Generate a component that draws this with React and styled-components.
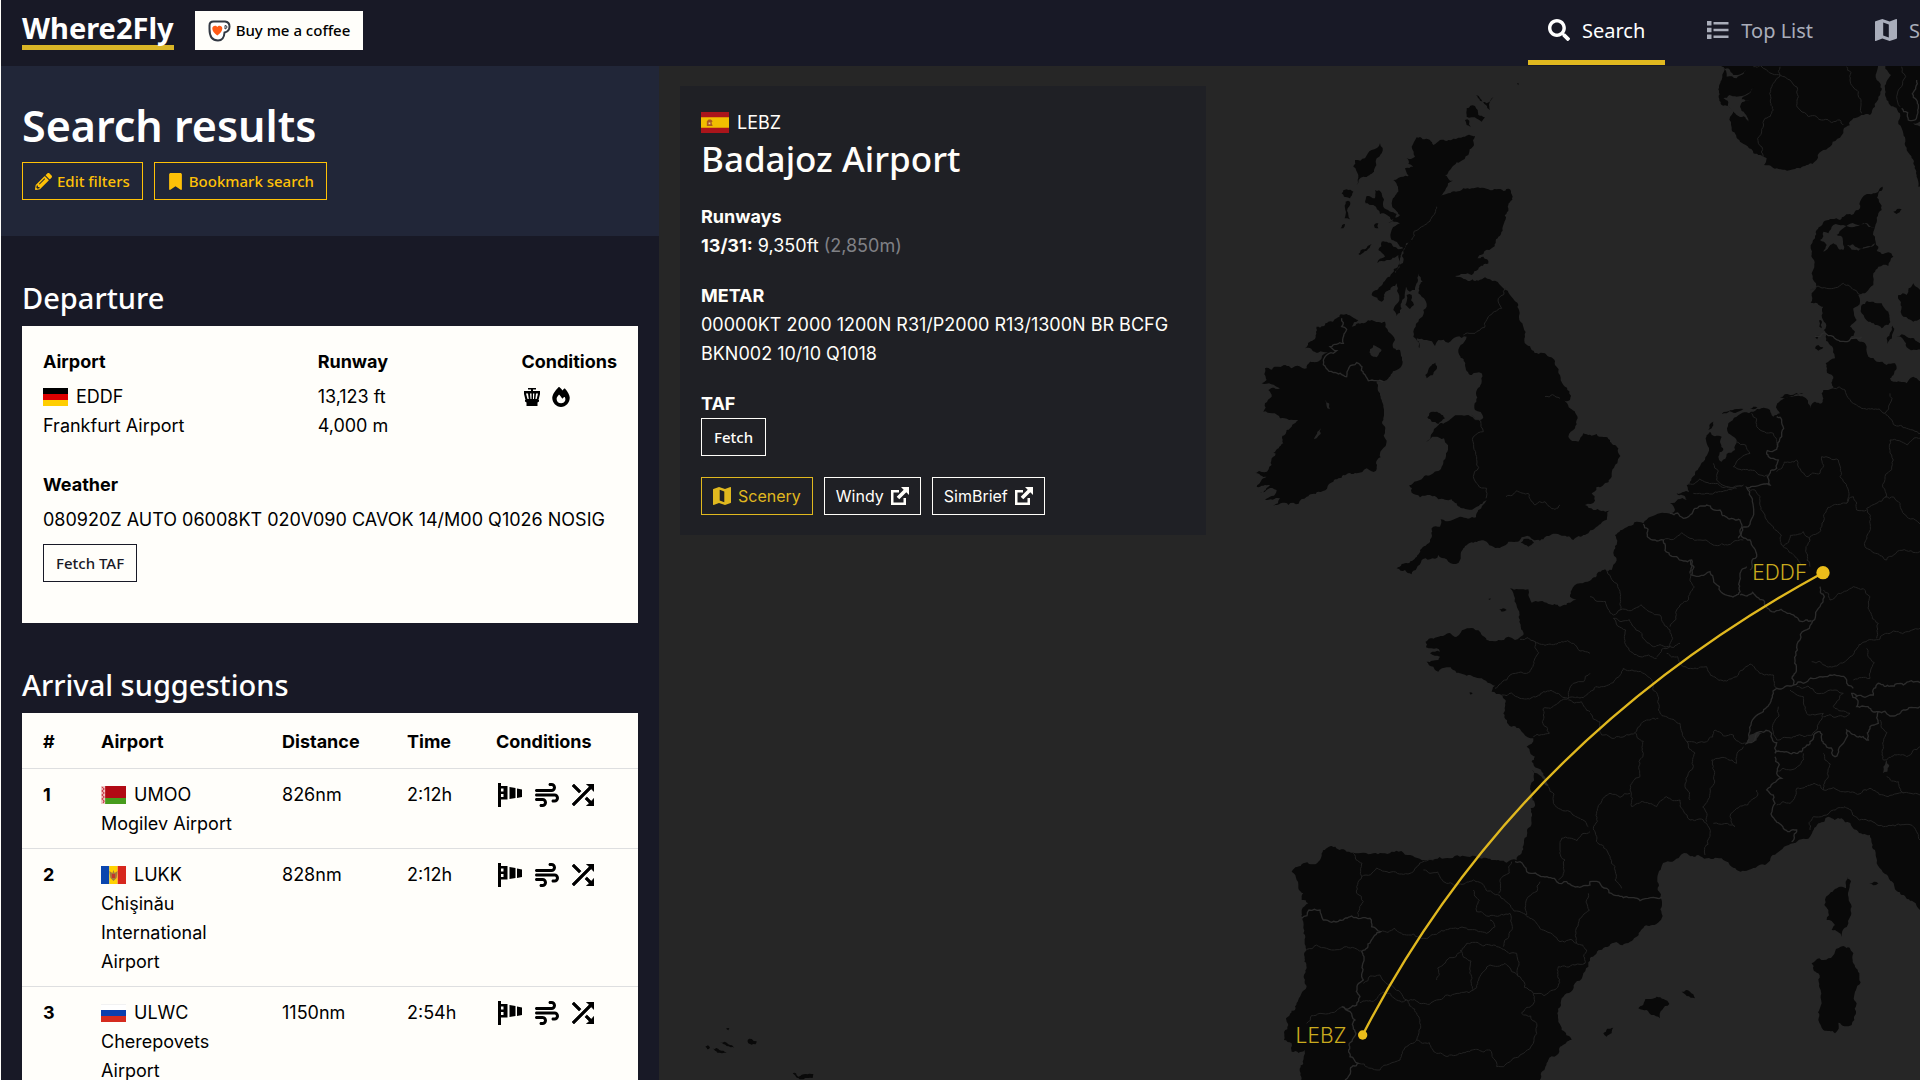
import React from "react";
import styled, { createGlobalStyle } from "styled-components";
import { FaPencilAlt, FaSearch } from "react-icons/fa";
import { FaBookmark, FaFire, FaWind } from "react-icons/fa6";

const arrivals = [
  { icao: "UMOO", name: "Mogilev Airport", flag: "by", distance: "826nm", time: "2:12h" },
  { icao: "LUKK", name: "Chişinău International Airport", flag: "md", distance: "828nm", time: "2:12h" },
  { icao: "ULWC", name: "Cherepovets Airport", flag: "ru", distance: "1150nm", time: "2:54h" },
];

export default function App() {
  return (
    <>
      <GlobalStyle />
      <Page>
        <Header />
        <Main>
          <Sidebar>
            <ResultsHeader>
              <Title>Search results</Title>
              <ButtonRow>
                <Button $color="#ffc107">
                  <FaPencilAlt size={17} />
                  Edit filters
                </Button>
                <Button $color="#ffc107">
                  <FaBookmark size={17} />
                  Bookmark search
                </Button>
              </ButtonRow>
            </ResultsHeader>
            <Departure />
            <Arrivals />
          </Sidebar>
          <MapArea>
            <EuropeMap />
            <AirportInfo />
          </MapArea>
        </Main>
      </Page>
    </>
  );
}

function Header() {
  return (
    <TopBar>
      <Logo href="#">Where2Fly</Logo>
      <CoffeeLink href="#coffee">
        <CupIcon />
        Buy me a coffee
      </CoffeeLink>
      <Nav>
        <NavLink href="#search" $active>
          <FaSearch size={22} />
          Search
        </NavLink>
        <NavLink href="#top">
          <ListIcon />
          Top List
        </NavLink>
        <NavLink href="#scenery">
          <MapIcon size={22} />
          Scenery
        </NavLink>
      </Nav>
    </TopBar>
  );
}

function Departure() {
  return (
    <Section>
      <SectionTitle>Departure</SectionTitle>
      <Card>
        <Facts>
          <div>
            <Label>Airport</Label>
            <Code>
              <Flag country="de" />
              EDDF
            </Code>
            <Text>Frankfurt Airport</Text>
          </div>
          <div>
            <Label>Runway</Label>
            <Text>13,123 ft</Text>
            <Text>4,000 m</Text>
          </div>
          <div>
            <Label>Conditions</Label>
            <Icons $gap={10}>
              <TowerIcon />
              <FaFire size={20} />
            </Icons>
          </div>
        </Facts>
        <Label>Weather</Label>
        <Text>080920Z AUTO 06008KT 020V090 CAVOK 14/M00 Q1026 NOSIG</Text>
        <TafButton $color="#181926">Fetch TAF</TafButton>
      </Card>
    </Section>
  );
}

function Arrivals() {
  return (
    <Section>
      <SectionTitle>Arrival suggestions</SectionTitle>
      <Table>
        <thead>
          <tr>
            <Th $width="68px">#</Th>
            <Th $width="181px">Airport</Th>
            <Th $width="125px">Distance</Th>
            <Th $width="89px">Time</Th>
            <Th $width="auto">Conditions</Th>
          </tr>
        </thead>
        <tbody>
          {arrivals.map((airport, i) => (
            <tr key={airport.icao}>
              <Td>
                <b>{i + 1}</b>
              </Td>
              <Td>
                <Code>
                  <Flag country={airport.flag} />
                  {airport.icao}
                </Code>
                {airport.name}
              </Td>
              <Td>{airport.distance}</Td>
              <Td>{airport.time}</Td>
              <Td>
                <Icons $gap={13}>
                  <WindsockIcon />
                  <FaWind size={24} />
                  <CrossIcon />
                </Icons>
              </Td>
            </tr>
          ))}
        </tbody>
      </Table>
    </Section>
  );
}

function AirportInfo() {
  return (
    <InfoPanel>
      <Code>
        <Flag country="es" width={28} height={21} />
        LEBZ
      </Code>
      <InfoTitle>Badajoz Airport</InfoTitle>
      <InfoBlock>
        <b>Runways</b>
        <Text>
          <b>13/31:</b> 9,350ft <Muted>(2,850m)</Muted>
        </Text>
      </InfoBlock>
      <InfoBlock>
        <b>METAR</b>
        <Text>00000KT 2000 1200N R31/P2000 R13/1300N BR BCFG BKN002 10/10 Q1018</Text>
      </InfoBlock>
      <InfoBlock>
        <b>TAF</b>
        <Button $color="#fffefa">Fetch</Button>
      </InfoBlock>
      <ButtonRow>
        <InfoLink href="#scenery" $color="#e0b81f">
          <MapIcon size={18} />
          Scenery
        </InfoLink>
        <InfoLink href="#windy" $color="#fffefa">
          Windy
          <ExternalIcon />
        </InfoLink>
        <InfoLink href="#simbrief" $color="#fffefa">
          SimBrief
          <ExternalIcon />
        </InfoLink>
      </ButtonRow>
    </InfoPanel>
  );
}

function Flag({ country, width = 25, height = 18 }) {
  return (
    <svg width={width} height={height} viewBox="0 0 24 18" preserveAspectRatio="none">
      {country === "de" && (
        <>
          <path fill="#000" d="M0 0h24v6H0z" />
          <path fill="#d00" d="M0 6h24v6H0z" />
          <path fill="#ffce00" d="M0 12h24v6H0z" />
        </>
      )}
      {country === "by" && (
        <>
          <path fill="#b20a14" d="M0 0h24v12H0z" />
          <path fill="#479c1c" d="M0 12h24v6H0z" />
          <path fill="#f2c9c9" d="M0 0h4v18H0z" />
          <path stroke="#c8313e" d="M1 1l2 2-2 2 2 2-2 2 2 2-2 2 2 2-1 2" fill="none" />
        </>
      )}
      {country === "md" && (
        <>
          <path fill="#0b46ae" d="M0 0h8v18H0z" />
          <path fill="#ffd200" d="M8 0h8v18H8z" />
          <path fill="#d7271d" d="M16 0h8v18h-8z" />
          <path fill="#a77b3b" d="M8 5l3 2 1-3 1 3 3-2-1 7-3 3-3-3z" />
          <path fill="#c4342b" d="M10.500 8h3v4h-3z" />
        </>
      )}
      {country === "ru" && (
        <>
          <path fill="#fff" d="M0 0h24v6H0z" />
          <path fill="#0b3fae" d="M0 6h24v6H0z" />
          <path fill="#d52b1e" d="M0 12h24v6H0z" />
          <path stroke="#e4e4e4" d="M0 0h24" />
        </>
      )}
      {country === "es" && (
        <>
          <path fill="#aa151b" d="M0 0h24v18H0z" />
          <path fill="#f1bf00" d="M0 4.500h24v9H0z" />
          <path fill="#ad5a1d" d="M5 12V8l1.500-1.500h2L10 8l-1 1 1 3z" />
          <path fill="#e6c9a0" d="M6.500 9h1.500v1.500H6.500z" />
        </>
      )}
    </svg>
  );
}

function CupIcon() {
  return (
    <svg width="23" height="22" viewBox="0 0 23 22" fill="none">
      <path
        d="M1.500 5.500Q1.500 1.500 5.500 1.500H17Q21.500 2 21.500 6.500 21.500 11.500 16.500 12.500 16 20.500 10 20.500 1.500 20.500 1.500 9z"
        fill="#fff"
        stroke="#323842"
        strokeWidth="2"
      />
      <path d="M17 5.500v3.500Q19 8.500 19 7 19 5.500 17 5.500z" stroke="#323842" />
      <path d="M9.300 15.500C6 13 4.300 11 4.300 8.500 4.300 5.500 8 4.700 9.300 7 10.600 4.700 14.300 5.500 14.300 8.500 14.300 11 12.600 13 9.300 15.500z" fill="#ff5a16" />
    </svg>
  );
}

function ListIcon() {
  return (
    <svg width="22" height="18" viewBox="0 0 22 18" fill="currentColor">
      <path d="M0 0h4.500v4.500H0zM0 6.700h4.500v4.500H0zM0 13.400h4.500v4.500H0z" />
      <path d="M6.500 1h15v2.500h-15zM6.500 7.700h15v2.500h-15zM6.500 14.400h15v2.500h-15z" />
    </svg>
  );
}

function MapIcon({ size }) {
  return (
    <svg width={size} height={size} viewBox="3 3 18 18" fill="currentColor">
      <path d="M20.500 3l-.160.030L15 5.100 9 3 3.360 4.900c-.210.070-.360.250-.360.480V20.500c0 .280.220.500.500.500l.160-.030L9 18.900l6 2.100 5.640-1.900c.210-.070.360-.250.360-.480V3.500c0-.280-.220-.500-.500-.500zM14.300 18.200l-4.600-1.600V5.800l4.600 1.600z" />
    </svg>
  );
}

function TowerIcon() {
  return (
    <svg width="18" height="20" viewBox="0 0 18 20" fill="currentColor">
      <path d="M5 1h8v1.500h-3V4h7v3l-1.500 6H16v1.500l-1.500 1V19h-11v-3.500L2 14.500V13h.500L1 7V4h7V2.500H5z" />
      <path d="M3 6.500h2l.8 5.500H4.500zM7 6.500h1.500V12h-1zM10 6.500h1.300l-.3 5.500h-1zM13 6.500h2L13.700 12h-1.300z" fill="#fffefa" />
    </svg>
  );
}

function WindsockIcon() {
  return (
    <svg width="24" height="24" viewBox="0 0 24 24" fill="currentColor">
      <path d="M0 0h3v3h6.500v13.500H3V24H0zM3 5.500v3h2.500v-3zm0 5.500v3h2.500v-3z" fillRule="evenodd" />
      <path d="M11.500 4l6 1v10l-6 1zM19 5.500l5 1V14l-5 1z" />
    </svg>
  );
}

function CrossIcon() {
  return (
    <svg width="22" height="22" viewBox="4 4 16 16" fill="currentColor" stroke="currentColor" strokeWidth="0.500">
      <path d="M10.590 9.170L5.410 4 4 5.410l5.170 5.170 1.420-1.410zM14.500 4l2.040 2.040L4 18.590 5.410 20 17.960 7.460 20 9.500V4h-5.500zm.330 9.410l-1.410 1.410 3.130 3.130L14.500 20H20v-5.500l-2.040 2.040-3.130-3.130z" />
    </svg>
  );
}

function ExternalIcon() {
  return (
    <svg width="18" height="18" viewBox="0 0 18 18" fill="currentColor">
      <path d="M0 3h8v2.500H2.500v10h10V11H15v7H0z" />
      <path d="M10 0h8v8l-2.700-2.700-7 7-2.600-2.600 7-7z" />
    </svg>
  );
}

/* Map drawing. One map unit is a third of a pixel. */

// Each part is [dx, dy, "x,y x,y ..."]; the parts are joined into one list.
function toPoints(parts) {
  return parts.flatMap(([dx, dy, list]) =>
    list.split(" ").map((pair) => {
      const [x, y] = pair.split(",").map(Number);
      return [x + dx, y + dy];
    })
  );
}

// Breaks long straight edges into small uneven ones so that coasts look natural.
function toPath(parts, closed, amount = 0.2) {
  const points = toPoints(parts);
  if (closed) points.push(points[0]);
  let seed = 7;
  const random = () => {
    seed = (seed * 16807) % 2147483647;
    return seed / 2147483647 - 0.5;
  };
  const split = (a, b) => {
    const dx = b[0] - a[0];
    const dy = b[1] - a[1];
    const length = Math.hypot(dx, dy);
    if (length < 9 || length > 400) return [b];
    const shift = random() * amount * 2;
    const middle = [(a[0] + b[0]) / 2 - dy * shift, (a[1] + b[1]) / 2 + dx * shift];
    return [...split(a, middle), ...split(middle, b)];
  };
  const result = [points[0]];
  for (let i = 1; i < points.length; i++) {
    result.push(...split(points[i - 1], points[i]));
  }
  return (
    "M" + result.map(([x, y]) => `${Math.round(x)} ${Math.round(y)}`).join("L") + (closed ? "Z" : "")
  );
}

const land = [
  // Great Britain
  [
    [0, 0, "650,232 668,238 690,240 700,255 720,240 760,236 790,230 825,228 822,255 805,285 780,305 750,330 735,345 750,362 758,362 738,385 720,410 745,400 790,385 840,384 890,388 930,388 938,410 925,445 912,490 895,530 875,565 850,582 810,600 850,590 865,610 835,628 815,645 765,648 800,660 835,662 855,652 885,662 910,685 930,705 952,728 958,780 975,830 995,870 1040,885 1065,915"],
    [1080, 0, "0,945 10,975 30,1020 5,1020 30,1045 50,1080 45,1105 25,1130 55,1145 70,1120 110,1122 150,1140 175,1165 172,1210 155,1250 130,1275 95,1300 105,1322 75,1335 100,1350 148,1352 140,1380 110,1400 75,1425 40,1440 0,1425"],
    [0, 0, "1030,1438 990,1430 960,1440 925,1445 905,1460 880,1460 860,1445 820,1448 790,1465 780,1500 768,1512 740,1498 715,1485 690,1498 665,1500 650,1525 635,1543 615,1530 590,1525 605,1512 640,1500 660,1470 690,1440 695,1405 720,1400 722,1378 780,1370 828,1372 835,1350 860,1320 885,1298 850,1325 830,1340 800,1348 770,1330 755,1318 715,1318 690,1305 660,1312 635,1298 628,1275 660,1260 700,1240 730,1210 738,1180 732,1135 705,1130 678,1145 700,1115 720,1090 755,1075 805,1065 830,1080 850,1072 825,1050 828,1000 845,960 845,940 815,945 795,915 778,885 782,855 800,830 770,830 745,848 715,840 705,858 680,840 650,835 658,865 640,830 640,815 655,785 680,740 665,710 655,700 668,665 655,640 645,690 630,695 618,680 605,745 590,768 580,750 595,700 590,670 545,725 515,705 540,680 570,650 600,610 595,585 560,600 532,610 555,590 535,570 545,545 580,560 610,565 575,540 575,510 600,490 565,488 600,465 575,430 595,395 580,360 610,350 635,350 615,325 640,320 620,295 645,290 635,260"],
  ],
  // Ireland
  [[0, 0, "410,775 440,762 475,780 455,800 475,790 515,780 555,785 565,815 585,840 580,865 600,870 608,905 590,930 560,960 530,965 540,1000 550,1040 555,1110 545,1170 528,1210 528,1232 500,1225 470,1240 430,1245 400,1265 355,1295 320,1310 265,1335 220,1338 240,1315 195,1320 230,1290 180,1298 210,1275 170,1280 200,1250 162,1240 215,1215 220,1190 300,1165 220,1178 250,1150 260,1110 295,1080 240,1075 190,1055 195,1030 215,1010 205,990 240,985 185,970 200,960 195,925 235,920 275,925 320,925 330,905 365,895 385,875 315,865 340,840 350,800 385,785"]],
  // Hebrides, Skye, Orkney, Man, Anglesey, Wight and smaller isles
  [[0, 0, "540,250 545,280 530,295 522,335 490,350 470,375 475,345 460,320 465,300 495,295 515,270"]],
  [[0, 0, "425,400 440,388 460,395 450,415 432,410"]],
  [[0, 0, "437,425 450,425 450,478 434,475"]],
  [[0, 0, "422,505 435,492 430,505"]],
  [[0, 0, "525,390 545,400 550,440 590,462 575,480 540,462 520,435 497,430 500,408 525,415"]],
  [[0, 0, "522,495 535,490 535,505 524,503"]],
  [[0, 0, "475,582 495,568 515,552 500,572 480,585"]],
  [[0, 0, "620,705 635,705 642,735 630,747 616,735"]],
  [[0, 0, "800,145 825,138 835,165 855,172 845,185 815,172 800,170"]],
  [[0, 0, "795,180 808,182 812,202 800,195"]],
  [[0, 0, "828,105 840,115 860,130 880,112 868,130 870,150 858,135 840,122"]],
  [[0, 0, "951,70 956,70 955,76"]],
  [[0, 0, "706,908 708,930 680,955 676,945 690,920"]],
  [[0, 0, "682,1072 700,1055 720,1060 735,1075 715,1092 695,1085"]],
  [[0, 0, "962,1448 985,1436 1002,1448 985,1460"]],
  // Continent
  [
    [1080, 0, "1100,960 1060,950 1040,970 1000,965 990,955 1010,925 1005,910 980,915 950,905 925,890 920,860 905,845 870,835 885,815 870,800 890,780 880,745 900,725 895,705 920,695 940,675 940,640 955,620 985,618 1000,590 985,577 945,575 955,560 945,530 945,500 965,450 955,400 968,380 940,400 915,405 900,425 875,465 840,480 795,482 770,510 765,535 752,565 755,640 768,670 755,700 752,728 790,740 797,790 797,830 820,870 825,895 797,910 800,930 820,950 820,985 790,990 785,1030 765,1025 752,1045 738,1015 690,1010 665,1020 650,1035 660,1060 640,1070 630,1050 580,1055 530,1070 505,1090 505,1120 530,1140 525,1170 485,1205 475,1190 490,1170 485,1130 450,1115 440,1150 430,1205 405,1245 380,1275 395,1300 350,1300 380,1320 330,1330 345,1350 300,1360 250,1390 200,1402 165,1425 162,1470 155,1530"],
    [180, 1500, "990,62 960,70 935,90 930,110 960,118 935,125 900,140 865,132 815,128 805,105 805,88 775,88 750,85 765,115 775,150 780,190 790,225 765,240 745,230 715,240 680,240 665,225 640,205 615,208 590,230 555,225 530,232 497,245 498,262 530,265 540,275 510,280 540,290 535,300 500,305 520,320 535,335 560,322 600,340 640,350 665,355 690,370 710,375 695,395 725,405 735,440 730,460 755,500 790,520 820,535 800,560 825,590 815,605 850,640 865,680 845,650 817,630 815,700 825,738 812,745 800,830 785,880 770,900 740,908 700,900 660,895 600,890 570,895 510,900 450,885 395,875 340,880 280,878 255,870 215,858 185,880 175,905 130,910 95,935 110,960 115,985 130,1000 125,1020 145,1030 125,1050 130,1120 140,1170 135,1240 120,1310 105,1350 78,1375 85,1395 72,1440 95,1450 95,1475 135,1470 130,1510 130,1580 845,1580 865,1500 900,1460 935,1440 905,1410 892,1360 910,1310 945,1270 985,1220"],
    [1170, 1500, "0,1195 30,1170 120,1145 150,1115 215,1075 215,1020 203,990 205,940 240,905 290,880 325,885 350,895 400,900 425,920 470,932 525,915 560,880 610,850 660,830 685,790 715,770 755,775 800,810 840,825 855,870 875,930 895,950 935,1005 970,1025 1020,1060"],
  ],
  // Norway, Sweden
  [[1080, 0, "480,0 485,60 485,135 520,150 515,210 540,245 580,280 620,295 612,315 650,325 700,328 740,315 770,300 810,260 850,210 880,175 930,165 945,140 955,110 965,90 950,60 965,0"]],
  [[1080, 0, "975,0 975,90 990,135 1020,160 1030,220 1040,270 1060,310 1070,350 1075,380 1100,380 1100,0"]],
  // Danish islands
  [[1080, 0, "905,735 940,725 965,730 985,755 985,795 965,805 925,785 905,760"]],
  [[1080, 0, "1015,705 1040,705 1060,670 1100,700 1100,780 1060,785 1030,770 1025,740"]],
  [[1080, 0, "1010,828 1040,830 1080,850 1100,865 1040,862"]],
  [[1080, 0, "998,797 1000,815 982,852 980,835"]],
  [[1080, 0, "1000,455 1025,448 1010,462"]],
  [[1080, 0, "778,780 786,785 785,805 778,800"]],
  [[1080, 0, "765,830 780,828 772,838"]],
  [[1080, 0, "765,865 775,855 790,862 775,872"]],
  // Frisian islands
  [[1080, 0, "485,1062 500,1055 550,1047 500,1060"]],
  [[1080, 0, "570,1047 592,1042 580,1048"]],
  [[1080, 0, "660,1012 690,1005 730,1002 690,1010"]],
  [[1080, 0, "445,1110 460,1085 455,1105"]],
  // Channel and Biscay islands
  [[180, 1500, "718,148 740,150 725,155"]],
  [[180, 1500, "685,117 692,115 690,120"]],
  [[180, 1500, "628,398 638,400 632,404"]],
  // Mediterranean islands
  [[1170, 1500, "772,945 778,985 785,1040 775,1090 755,1130 725,1110 735,1095 710,1080 715,1050 703,1035 715,1005 750,980 768,985"]],
  [[1170, 1500, "760,1158 790,1180 795,1220 808,1240 798,1290 800,1330 785,1395 745,1388 735,1420 700,1410 685,1380 692,1290 685,1240 665,1210 715,1195 735,1175"]],
  [[1170, 1500, "145,1345 200,1310 238,1332 210,1375 185,1365 170,1350"]],
  [[1170, 1500, "275,1295 300,1295 315,1315 290,1308"]],
  [[1170, 1500, "40,1420 70,1403 65,1420 50,1430"]],
  [[1170, 1500, "838,970 865,970 850,976"]],
  // Azores
  [[-1560, 2850, "76,110 84,106 90,112 82,118"]],
  [[-1560, 2850, "98,116 118,120 140,129 112,128"]],
  [[-1560, 2850, "120,96 145,103 164,113 140,108"]],
  [[-1560, 2850, "138,56 148,55 145,61"]],
  [[-1560, 2850, "203,90 215,87 230,94 226,103 205,100"]],
  [[-1560, 2850, "338,190 348,190 355,200 400,192 398,204 370,208 350,203"]],
];

const water = [
  [[0, 0, "520,855 510,868 512,885 530,892 538,878 545,870"]],
  [[1080, 0, "790,515 780,540 800,555 790,575 820,550 850,570 848,535 830,525 850,505 910,490 945,502 900,495 850,495 820,495 805,520"]],
  [[1080, 0, "860,555 895,565 945,550 940,558 895,572"]],
  [[1080, 0, "485,20 520,45 560,30 530,55 500,50"]],
  [[1080, 0, "490,115 530,110 585,80 545,118 570,120 540,140 565,185 530,165 510,145"]],
  [[1170, 1500, "890,600 892,635 878,640 880,620"]],
  [[1170, 1500, "470,545 500,515 540,512 510,522 480,550"]],
  [[0, 0, "375,1020 390,1048 382,1045"]],
  [[0, 0, "362,1105 350,1135 342,1138 352,1115"]],
  [[0, 0, "610,570 640,540 600,600 585,640"]],
];

const countryBorders = [
  [[0, 0, "425,775 425,800 440,808 430,850 390,860 410,872 370,900 400,938 440,950 470,908 490,940 505,962 550,965"]],
  [[1080, 0, "765,830 820,830 855,845 905,830"]],
  [[1080, 0, "650,1070 665,1080 665,1130 650,1168 622,1172 625,1190 655,1200 650,1225 622,1250 630,1275 560,1282 580,1340 565,1400 540,1410 545,1430 570,1440 590,1490 570,1530"]],
  [[1080, 0, "330,1360 370,1375 405,1345 440,1335 480,1350 540,1380 545,1415 535,1435"]],
  [[1080, 0, "250,1392 262,1430 310,1440 318,1475 350,1490 395,1500 390,1540"]],
  [[1170, 1500, "300,0 305,45 360,35 375,70 420,108 450,95 450,50 470,20"]],
  [[1170, 1500, "450,105 520,120 545,155 600,160 665,183"]],
  [[1170, 1500, "690,80 690,140 665,190 630,240 615,300 610,375 560,385 540,430 510,460 480,510 470,550 510,515 545,520 555,580 600,580 635,575 660,545 690,515 700,550 735,590 745,570 770,510 800,530 835,540 840,500 865,490 865,455 800,440 785,400 850,405 865,370 940,375 990,368"]],
  [[1170, 1500, "610,375 640,370 690,350 720,345 770,360 790,385"]],
  [[1170, 1500, "865,455 900,468 940,450 990,440"]],
  [[1170, 1500, "555,590 560,640 575,655 530,690 555,730 555,780 580,805 620,810 605,845"]],
  [[180, 1500, "765,905 790,915 800,935 850,950 890,965 920,965 940,978 990,975"], [1170, 1500, "0,965 50,985 70,1005 110,1010 150,1022 215,1012"]],
  [[180, 1500, "125,1075 180,1050 190,1080 240,1080 275,1068 330,1075 335,1100 362,1115 305,1175 310,1260 292,1275 300,1310 290,1335 245,1340 285,1380 285,1415 268,1450 270,1490 295,1510 255,1560"]],
  [[1080, 0, "1025,145 1045,180 1065,180 1075,140 1070,60"]],
];

const regionBorders = [
  [[0, 0, "915,685 895,715 905,745 865,770 825,820 790,825"]],
  [[0, 0, "815,1065 850,1115 820,1130 830,1190 820,1250 860,1285 858,1315"]],
  [[0, 0, "918,1310 985,1300 1005,1335 1035,1325 1065,1348 1080,1335"]],
  [[0, 0, "1035,1010 1080,1015"]],
  [[0, 0, "635,540 665,500 710,440"]],
  [[1080, 0, "580,20 620,30 660,45 690,60 715,110 720,150 745,170 790,180 840,180 850,195"]],
  [[1080, 0, "660,20 640,70 640,150 612,180 610,290"]],
  [[1080, 0, "860,20 870,60 895,95 905,160"]],
  [[1080, 0, "1025,20 1025,80 1010,110 1020,140"]],
  [[1080, 0, "750,690 800,685 850,670 885,690 905,705"]],
  [[1080, 0, "820,985 855,990 895,1040 975,1060 1040,1105 1090,1120"]],
  [[1080, 0, "990,1000 990,1030 975,1060"]],
  [[1080, 0, "1090,1130 990,1140 1000,1200 975,1250 980,1310 920,1345 930,1390 915,1460 980,1500 1080,1475"]],
  [[1080, 0, "650,1235 710,1200 740,1250 780,1240 785,1190 835,1200 840,1250 865,1290 860,1330 795,1360 785,1400 750,1430 740,1480 750,1520"]],
  [[1080, 0, "975,1310 1020,1330 1040,1370 1090,1395"]],
  [[1080, 0, "560,1285 600,1310 640,1400 670,1460 720,1515"]],
  [[1080, 0, "670,1460 730,1415 750,1440"]],
  [[1080, 0, "310,1440 420,1440 550,1440"]],
  [[1080, 0, "380,1275 460,1270 550,1275 400,1300"]],
  [[1080, 0, "575,1060 590,1100 640,1120 655,1160"]],
  [[1080, 0, "460,1210 470,1260 530,1285"]],
  [[1080, 0, "530,1145 570,1180 520,1220 600,1245 625,1245"]],
  [[1080, 0, "860,1330 880,1310 890,1350 920,1350"]],
  [[180, 1500, "780,238 825,245 905,245 940,250 990,280"]],
  [[180, 1500, "825,245 822,310 800,340 740,360 705,385"]],
  [[180, 1500, "725,405 780,415 850,395 895,400 925,415 990,395"]],
  [[180, 1500, "990,340 940,370 925,415 850,445 868,520 820,530"]],
  [[180, 1500, "925,420 990,455"]],
  [[180, 1500, "865,680 880,730 930,755 985,800"]],
  [[180, 1500, "990,815 905,835 900,870 915,900 910,940 895,960"]],
  [[180, 1500, "280,880 305,950 290,1000 310,1025 295,1070"]],
  [[180, 1500, "305,950 400,935 450,940 520,900"]],
  [[180, 1500, "490,930 560,970 640,960 700,1000 790,1060 850,1110 900,1145 950,1150"]],
  [[180, 1500, "640,990 650,1055 750,1060 755,1090 730,1160"]],
  [[180, 1500, "755,905 720,960 715,1000"]],
  [[180, 1500, "840,965 805,1010 800,1065"]],
  [[180, 1500, "362,1115 440,1125 580,1105 680,1120 705,1100 690,1080"]],
  [[180, 1500, "310,1270 360,1245 400,1280 440,1320 530,1320 640,1290 690,1215 735,1210 820,1300 880,1290 895,1220 945,1215"]],
  [[180, 1500, "530,1260 560,1200 620,1150 690,1155 770,1180 775,1250"]],
  [[180, 1500, "600,1170 635,1250 640,1290"]],
  [[180, 1500, "300,1328 440,1320 480,1380 470,1440 420,1500 360,1530 295,1510"]],
  [[180, 1500, "470,1440 530,1480 620,1475 690,1470 710,1520 780,1485 820,1450 830,1390 785,1360 820,1300"]],
  [[180, 1500, "140,1168 200,1165 260,1160 305,1172"]],
  [[180, 1500, "140,1390 180,1360 245,1342"]],
  [[180, 1500, "985,1000 955,1090 950,1150 980,1170 975,1210 945,1215"]],
  [[1170, 1500, "0,110 70,165 90,150 80,70 50,30"]],
  [[1170, 1500, "90,150 210,165 240,210 240,260 200,290"]],
  [[1170, 1500, "300,40 295,120 260,150 240,200"]],
  [[1170, 1500, "70,175 110,260 150,290 200,295"]],
  [[1170, 1500, "70,175 150,215 190,260 230,260 270,250"]],
  [[1170, 1500, "230,280 280,320 350,320 405,362 440,350 480,312 550,345 560,385"]],
  [[1170, 1500, "0,395 40,380 100,325 190,370 205,450 270,490 290,545 350,545 375,510 430,525 470,550"]],
  [[1170, 1500, "0,460 35,525 135,518 170,480 205,475"]],
  [[1170, 1500, "135,518 160,580 150,650 120,690 125,740 200,740 230,710 270,720 300,780 350,790 360,820 345,885"]],
  [[1170, 1500, "290,545 310,620 285,680 300,720"]],
  [[1170, 1500, "350,785 360,700 365,600 410,595 440,610 460,560"]],
  [[1170, 1500, "120,700 60,700 20,760 10,805 50,870 75,920 75,960 95,985"]],
  [[1170, 1500, "500,690 500,710 440,745 420,770 435,800 370,790"]],
  [[1170, 1500, "665,305 710,320 780,290 850,240 920,215 990,205"]],
  [[1170, 1500, "700,90 720,120 745,100 790,80 840,110 865,190 860,235"]],
  [[1170, 1500, "830,265 840,355 790,360"]],
  [[1170, 1500, "565,440 550,490 560,540 610,530 680,510 700,460 650,460 640,410 600,390"]],
  [[1170, 1500, "620,380 680,400 735,390 760,400 730,440 780,460 700,470"]],
  [[1170, 1500, "700,580 715,650 700,690 760,695 840,685 880,705 990,705"]],
  [[1170, 1500, "560,735 600,730 620,685 690,675 700,690"]],
  [[1170, 1500, "870,480 880,560 880,600 950,590 990,560"]],
  [[1170, 1500, "890,650 940,700"]],
  [[1170, 1500, "660,810 670,770 730,750 765,740 830,780 880,800 970,800 990,840"]],
  [[1170, 1500, "560,635 600,630 640,600 640,580"]],
];

function EuropeMap() {
  return (
    <MapSvg viewBox="-1623 18 3783 3042" preserveAspectRatio="xMidYMid slice" role="img" aria-label="Route map">
      <g fill="#090909">
        {land.map((parts, i) => (
          <path key={i} d={toPath(parts, true)} />
        ))}
      </g>
      <g fill="#262626">
        {water.map((parts, i) => (
          <path key={i} d={toPath(parts, true)} />
        ))}
      </g>
      <g fill="none" stroke="#222" strokeWidth="3">
        {regionBorders.map((parts, i) => (
          <path key={i} d={toPath(parts, false, 0.2)} />
        ))}
      </g>
      <g fill="none" stroke="#2c2c2c" strokeWidth="4">
        {countryBorders.map((parts, i) => (
          <path key={i} d={toPath(parts, false, 0.22)} />
        ))}
      </g>
      <path d="M488 2925Q942 2043 1869 1538" fill="none" stroke="#e0b81f" strokeWidth="7" />
      <circle cx="488" cy="2925" r="14" fill="#ebbd1a" />
      <circle cx="1869" cy="1538" r="20" fill="#ebbd1a" />
      <MapLabel x="440" y="2948">LEBZ</MapLabel>
      <MapLabel x="1822" y="1560">EDDF</MapLabel>
    </MapSvg>
  );
}

const GlobalStyle = createGlobalStyle`
  * {
    box-sizing: border-box;
  }

  body {
    margin: 0;
    background: #181926;
    color: #fffefa;
    font-family: Inter, "Noto Sans", sans-serif;
    font-size: 18px;
    line-height: 29px;
  }

  svg {
    flex-shrink: 0;
  }
`;

const headingFont = `"Noto Sans", "Open Sans", sans-serif`;

const Page = styled.div`
  display: flex;
  flex-direction: column;
  height: 100vh;
  overflow: hidden;
  border-left: 1px solid #fffefa;
`;

const TopBar = styled.header`
  display: flex;
  align-items: center;
  flex-shrink: 0;
  height: 66px;
  padding-left: 21px;
  background: #181926;
`;

const Logo = styled.a`
  margin: 0 21px 6px 0;
  border-bottom: 5px solid #d9b526;
  color: #fff;
  font-family: ${headingFont};
  font-size: 29px;
  font-weight: 700;
  line-height: 34px;
  text-decoration: none;
`;

const CoffeeLink = styled.a`
  display: flex;
  align-items: center;
  gap: 5px;
  height: 39px;
  margin-bottom: 5px;
  padding: 0 13px;
  background: #fffefa;
  color: #000;
  font-family: ${headingFont};
  font-size: 15px;
  font-weight: 500;
  text-decoration: none;
`;

const Nav = styled.nav`
  display: flex;
  align-self: stretch;
  gap: 22px;
  width: 392px;
  margin-left: auto;
  overflow: hidden;
`;

const NavLink = styled.a`
  display: flex;
  align-items: center;
  flex-shrink: 0;
  gap: 12px;
  height: 65px;
  padding: 0 20px;
  border-bottom: 5px solid ${(props) => (props.$active ? "#e0b81f" : "transparent")};
  color: ${(props) => (props.$active ? "#fff" : "#a9adba")};
  font-family: ${headingFont};
  font-size: 20px;
  text-decoration: none;
`;

const Main = styled.main`
  display: flex;
  flex: 1;
  min-height: 0;
`;

const Sidebar = styled.div`
  flex: 0 0 658px;
  overflow: hidden;
  background: #181926;
`;

const ResultsHeader = styled.div`
  padding: 35px 21px 36px;
  background: #212638;
`;

const Title = styled.h1`
  margin: 0 0 11px;
  color: #fff;
  font-family: ${headingFont};
  font-size: 43px;
  font-weight: 600;
  line-height: 50px;
`;

const ButtonRow = styled.div`
  display: flex;
  gap: 11px;
`;

const Button = styled.button`
  display: flex;
  align-items: center;
  gap: 5px;
  height: 38px;
  padding: 0 12px;
  border: 1px solid ${(props) => props.$color};
  background: transparent;
  color: ${(props) => props.$color};
  font-family: ${headingFont};
  font-size: 15px;
  font-weight: 500;
  cursor: pointer;
`;

const TafButton = styled(Button)`
  margin-top: 10px;
`;

const InfoLink = styled.a`
  display: flex;
  align-items: center;
  gap: 7px;
  height: 38px;
  padding: 0 11px;
  border: 1px solid ${(props) => props.$color};
  color: ${(props) => props.$color};
  font-size: 16px;
  text-decoration: none;
`;

const Section = styled.section`
  padding: 44px 21px 0;
`;

const SectionTitle = styled.h2`
  margin: 0 0 10px;
  color: #fff;
  font-family: ${headingFont};
  font-size: 29px;
  font-weight: 500;
  line-height: 36px;
`;

const Card = styled.div`
  padding: 21px 21px 41px;
  background: #fffefa;
  color: #000;
`;

const Facts = styled.div`
  display: flex;
  justify-content: space-between;
  margin-bottom: 30px;
`;

const Label = styled.div`
  margin-bottom: 6px;
  font-weight: 700;
`;

const Text = styled.div``;

const Code = styled.div`
  display: flex;
  align-items: center;
  gap: 8px;
`;

const Icons = styled.div`
  display: flex;
  align-items: center;
  gap: ${(props) => props.$gap}px;
  height: 29px;
  padding-left: 2px;
`;

const Table = styled.table`
  width: 100%;
  table-layout: fixed;
  border-collapse: collapse;
  background: #fffefa;
  color: #000;
`;

const Th = styled.th`
  width: ${(props) => props.$width};
  padding: 14px 11px 12px;
  border-bottom: 1px solid #dedfe0;
  text-align: left;

  &:first-child {
    padding-left: 21px;
  }
`;

const Td = styled.td`
  padding: 11px 11px 10px;
  border-bottom: 1px solid #dedfe0;
  vertical-align: top;

  &:first-child {
    padding-left: 21px;
  }
`;

const MapArea = styled.div`
  position: relative;
  flex: 1;
  min-width: 0;
  background: #262626;
`;

const MapSvg = styled.svg`
  display: block;
  width: 100%;
  height: 100%;
`;

const MapLabel = styled.text`
  fill: #c9aa1e;
  font-size: 63px;
  font-weight: 300;
  text-anchor: end;
`;

const InfoPanel = styled.aside`
  position: absolute;
  top: 20px;
  left: 21px;
  width: 526px;
  padding: 22px 21px 20px;
  background: #1f2025;
`;

const InfoTitle = styled.h2`
  margin: 0 0 21px;
  font-family: ${headingFont};
  font-size: 35px;
  font-weight: 500;
  line-height: 44px;
`;

const InfoBlock = styled.div`
  margin-bottom: 21px;
`;

const Muted = styled.span`
  color: #808186;
`;
